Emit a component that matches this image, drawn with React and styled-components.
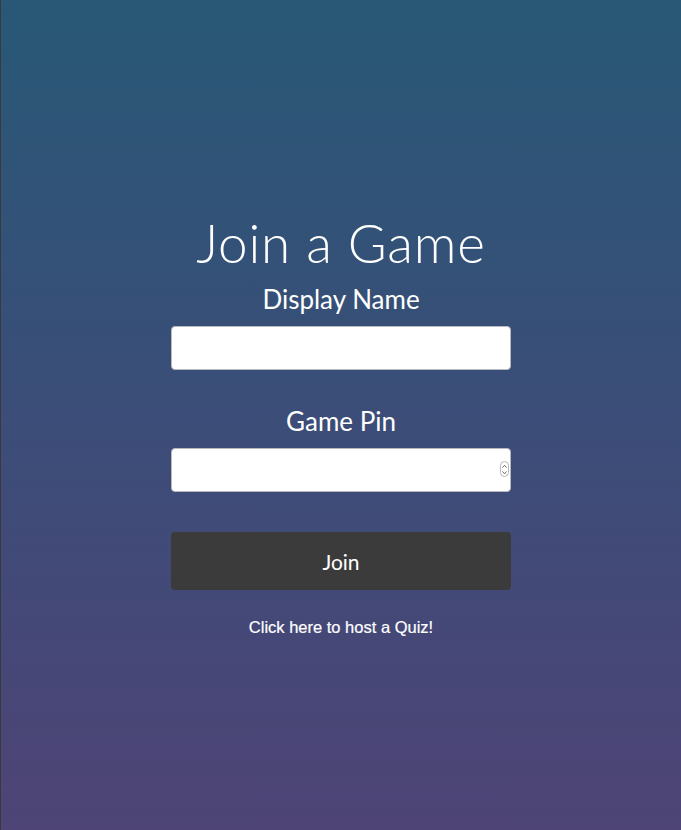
import React from 'react';
import styled, { createGlobalStyle } from 'styled-components';

const GlobalStyle = createGlobalStyle`
  html, body {
    margin: 0;
    padding: 0;
  }
  body {
    font-family: 'Lato', 'Liberation Sans', sans-serif;
  }
`;

const Page = styled.div`
  min-height: 830px;
  box-sizing: border-box;
  border-left: 1px solid #3a3a3c;
  background: linear-gradient(180deg, #285876 0%, #3d4c78 55%, #4e4476 100%);
  display: flex;
  flex-direction: column;
  align-items: center;
  padding-top: 212px;
  color: #fff;
`;

const Title = styled.h1`
  margin: 0;
  font-family: 'Lato', sans-serif;
  font-weight: 300;
  font-size: 53px;
  line-height: 62px;
  letter-spacing: 0.8px;
`;

const Form = styled.form`
  width: 340px;
  display: flex;
  flex-direction: column;
  align-items: stretch;
`;

const Label = styled.label`
  display: block;
  text-align: center;
  font-family: 'Lato', sans-serif;
  font-weight: 400;
  font-size: 26px;
  line-height: 30px;
  margin-top: ${p => p.$top}px;
  margin-bottom: 12px;
`;

const Field = styled.div`
  position: relative;
`;

const Input = styled.input`
  display: block;
  width: 100%;
  height: 44px;
  box-sizing: border-box;
  border: 1px solid #b9b9c0;
  border-radius: 4px;
  background: #fff;
  font-size: 16px;
  padding: 0 10px;
  outline: none;
  -moz-appearance: textfield;
  &::-webkit-outer-spin-button,
  &::-webkit-inner-spin-button {
    -webkit-appearance: none;
    margin: 0;
  }
`;

const Spinner = styled.span`
  position: absolute;
  right: 2px;
  top: 13px;
  width: 9px;
  height: 16px;
  box-sizing: border-box;
  border: 1px solid #b8b8b8;
  border-radius: 5px;
  display: flex;
  align-items: center;
  justify-content: center;
`;

const JoinButton = styled.button`
  margin-top: 40px;
  height: 58px;
  border: none;
  border-radius: 4px;
  background: #3b3b3b;
  color: #fff;
  font-family: 'Lato', sans-serif;
  font-size: 21px;
  cursor: pointer;
`;

const HostLink = styled.a`
  margin-top: 28px;
  text-align: center;
  color: #fff;
  text-decoration: none;
  font-family: 'Liberation Sans', Arial, sans-serif;
  font-size: 16.5px;
  font-weight: 500;
  -webkit-text-stroke: 0.2px #fff;
`;

export default function App() {
  return (
    <>
      <GlobalStyle />
      <Page>
        <Title>Join a Game</Title>
        <Form onSubmit={e => e.preventDefault()}>
          <Label $top={10}>Display Name</Label>
          <Input type="text" />
          <Label $top={36}>Game Pin</Label>
          <Field>
            <Input type="number" />
            <Spinner>
              <svg width="5" height="11" viewBox="0 0 5 11" fill="none" stroke="#555" strokeWidth="0.9">
                <path d="M0.5 3.5 L2.5 1.3 L4.5 3.5" />
                <path d="M0.5 7.5 L2.5 9.7 L4.5 7.5" />
              </svg>
            </Spinner>
          </Field>
          <JoinButton type="submit">Join</JoinButton>
          <HostLink href="#">Click here to host a Quiz!</HostLink>
        </Form>
      </Page>
    </>
  );
}
